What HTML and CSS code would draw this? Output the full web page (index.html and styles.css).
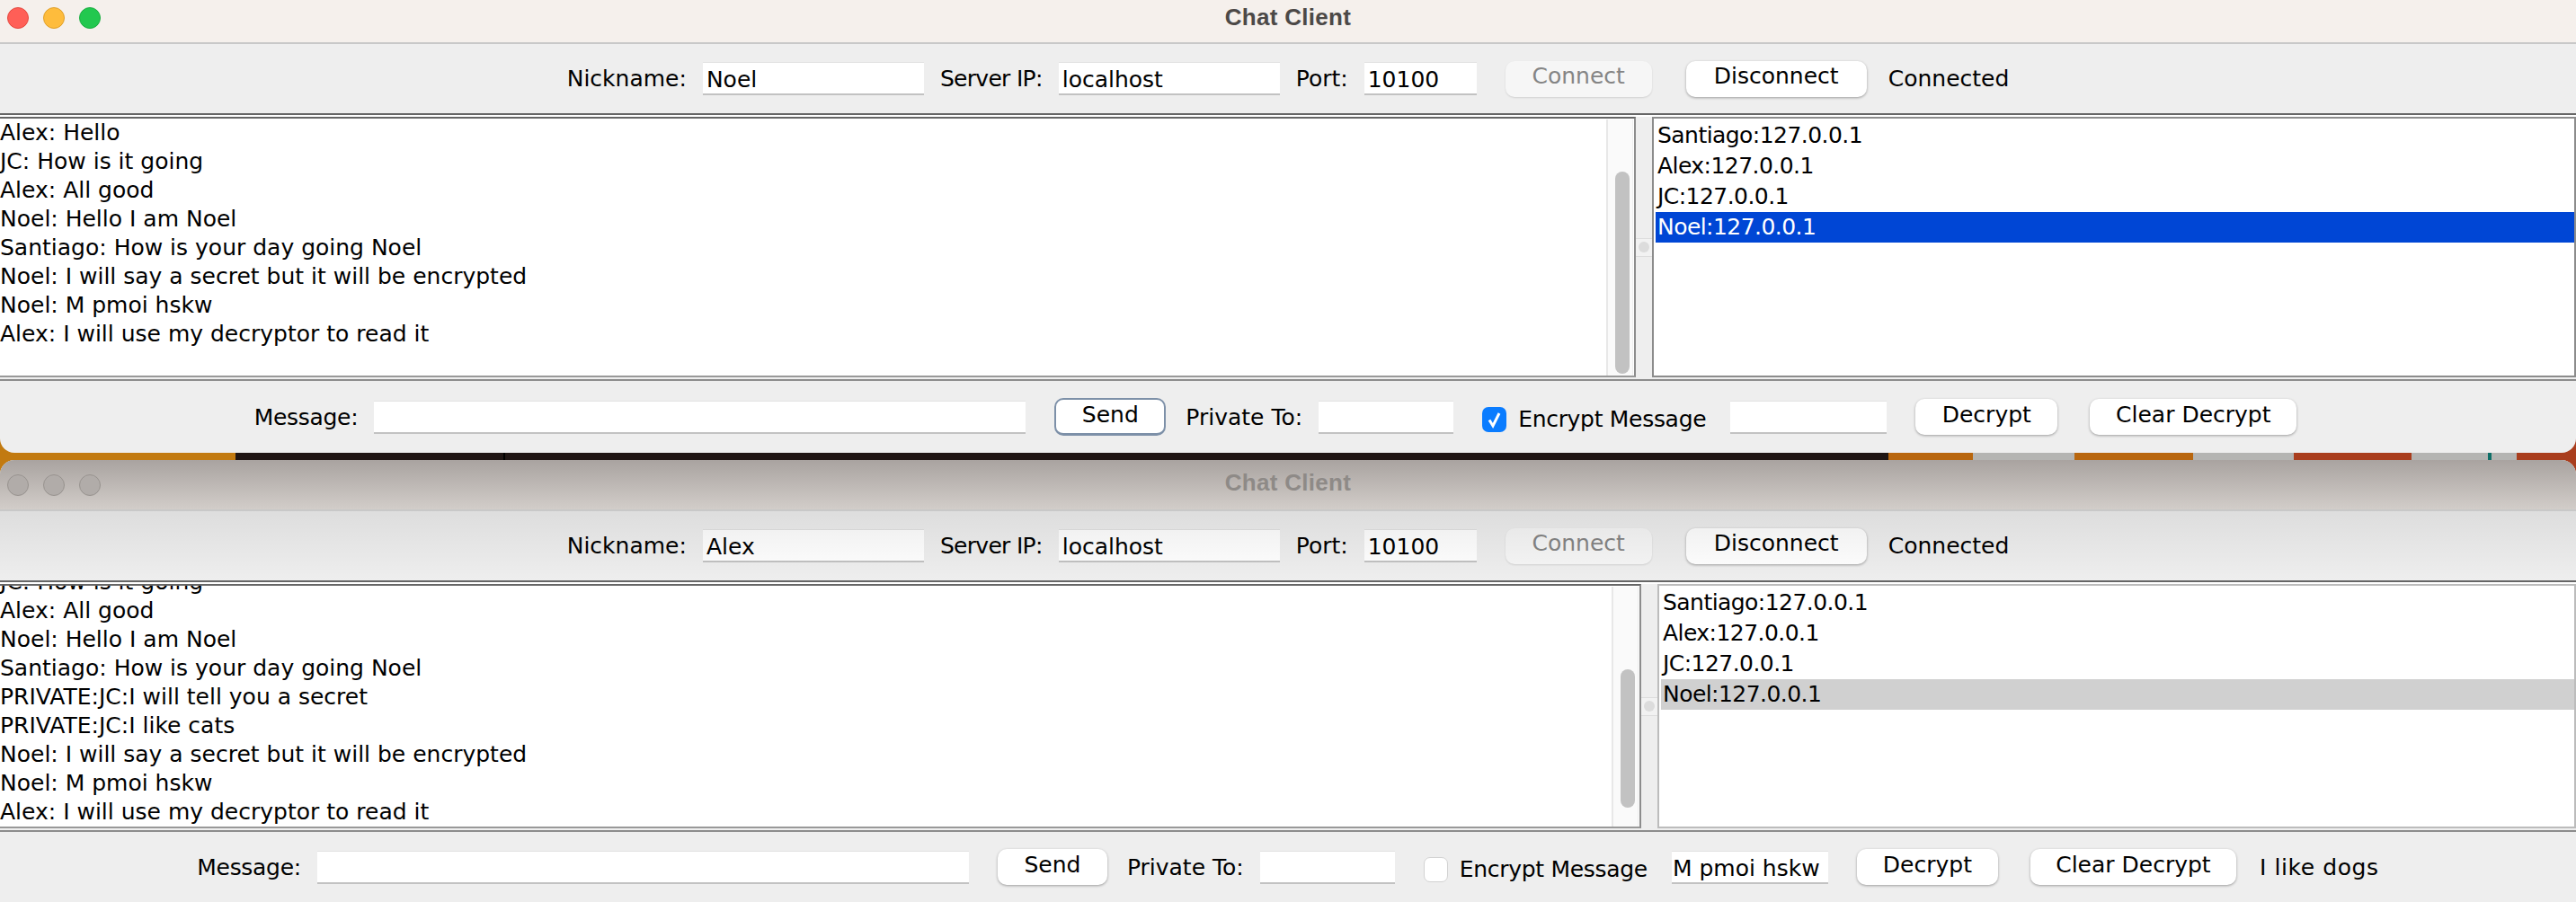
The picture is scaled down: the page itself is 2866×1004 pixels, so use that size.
FILE: index.html
```html
<!DOCTYPE html>
<html>
<head>
  <meta charset="UTF-8">
  <title>Chat Client</title>
  <link rel="stylesheet" href="styles.css">
</head>
<body>
  <!-- focused window -->
  <div class="window win-active">
    <div class="titlebar">
      <div class="lights">
        <span class="light red"></span>
        <span class="light yellow"></span>
        <span class="light green"></span>
      </div>
      <div class="title">Chat Client</div>
    </div>

    <div class="toolbar top-bar">
      <span class="lbl">Nickname:</span>
      <div class="field w-name">Noel</div>
      <span class="lbl lbl-server">Server IP:</span>
      <div class="field w-name">localhost</div>
      <span class="lbl">Port:</span>
      <div class="field w-port">10100</div>
      <div class="btn btn-connect" style="width:163px">Connect</div>
      <div class="btn" style="width:201px">Disconnect</div>
      <span class="lbl">Connected</span>
    </div>

    <div class="split">
      <div class="pane chat-pane">
        <div class="chat-log">
          <div class="row">Alex: Hello</div>
          <div class="row">JC: How is it going</div>
          <div class="row">Alex: All good</div>
          <div class="row">Noel: Hello I am Noel</div>
          <div class="row">Santiago: How is your day going Noel</div>
          <div class="row">Noel: I will say a secret but it will be encrypted</div>
          <div class="row">Noel: M pmoi hskw</div>
          <div class="row">Alex: I will use my decryptor to read it</div>
        </div>
        <div class="scroll"><div class="thumb"></div></div>
      </div>
      <div class="divider"><div class="handle"><span class="dot"></span></div></div>
      <div class="pane user-pane">
        <div class="user">Santiago:127.0.0.1</div>
        <div class="user">Alex:127.0.0.1</div>
        <div class="user">JC:127.0.0.1</div>
        <div class="user selected">Noel:127.0.0.1</div>
      </div>
    </div>

    <div class="toolbar bottom-bar">
      <span class="lbl lbl-msg">Message:</span>
      <div class="field w-msg"></div>
      <div class="btn btn-focus" style="width:124px">Send</div>
      <span class="lbl">Private To:</span>
      <div class="field w-private"></div>
      <div class="check-wrap">
        <span class="check checked">
          <svg viewBox="0 0 27 28" width="27" height="28"><path d="M8 14.5l4 6.5 7-14" fill="none" stroke="#fff" stroke-width="3"/></svg>
        </span>
        <span class="lbl lbl-msg">Encrypt Message</span>
      </div>
      <div class="field w-key"></div>
      <div class="btn" style="width:158px">Decrypt</div>
      <div class="btn" style="width:230px">Clear Decrypt</div>
      <span class="empty"></span>
    </div>
  </div>

  <!-- window behind -->
  <div class="window win-back">
    <div class="titlebar">
      <div class="lights">
        <span class="light"></span>
        <span class="light"></span>
        <span class="light"></span>
      </div>
      <div class="title">Chat Client</div>
    </div>

    <div class="toolbar top-bar">
      <span class="lbl">Nickname:</span>
      <div class="field w-name">Alex</div>
      <span class="lbl lbl-server">Server IP:</span>
      <div class="field w-name">localhost</div>
      <span class="lbl">Port:</span>
      <div class="field w-port">10100</div>
      <div class="btn btn-connect" style="width:163px">Connect</div>
      <div class="btn" style="width:201px">Disconnect</div>
      <span class="lbl">Connected</span>
    </div>

    <div class="split">
      <div class="pane chat-pane">
        <div class="chat-log">
          <div class="row">JC: How is it going</div>
          <div class="row">Alex: All good</div>
          <div class="row">Noel: Hello I am Noel</div>
          <div class="row">Santiago: How is your day going Noel</div>
          <div class="row">PRIVATE:JC:I will tell you a secret</div>
          <div class="row">PRIVATE:JC:I like cats</div>
          <div class="row">Noel: I will say a secret but it will be encrypted</div>
          <div class="row">Noel: M pmoi hskw</div>
          <div class="row">Alex: I will use my decryptor to read it</div>
        </div>
        <div class="scroll"><div class="thumb"></div></div>
      </div>
      <div class="divider"><div class="handle"><span class="dot"></span></div></div>
      <div class="pane user-pane">
        <div class="user">Santiago:127.0.0.1</div>
        <div class="user">Alex:127.0.0.1</div>
        <div class="user">JC:127.0.0.1</div>
        <div class="user selected">Noel:127.0.0.1</div>
      </div>
    </div>

    <div class="toolbar bottom-bar">
      <span class="lbl lbl-msg">Message:</span>
      <div class="field w-msg"></div>
      <div class="btn" style="width:122px">Send</div>
      <span class="lbl">Private To:</span>
      <div class="field w-private"></div>
      <div class="check-wrap">
        <span class="check"></span>
        <span class="lbl lbl-msg">Encrypt Message</span>
      </div>
      <div class="field w-cipher">M pmoi hskw</div>
      <div class="btn" style="width:157px">Decrypt</div>
      <div class="btn" style="width:229px">Clear Decrypt</div>
      <span class="lbl lbl-dogs">I like dogs</span>
    </div>
  </div>
</body>
</html>
```

FILE: styles.css
```css
html, body {
  margin: 0;
  padding: 0;
}

/* the desktop only shows in the strip between the two windows */
body {
  width: 2866px;
  height: 1004px;
  overflow: hidden;
  display: flex;
  flex-direction: column;
  gap: 8px;
  font-family: "DejaVu Sans", sans-serif;
  font-size: 25px;
  color: #000;
  background: linear-gradient(90deg,
    #c27a10 0 262px, #1f1513 262px 560px, #000 560px 562px, #1f1513 562px 2101px,
    #b8660e 2101px 2195px, #b4b4b2 2195px 2308px, #b8660e 2308px 2440px,
    #b4b4b2 2440px 2552px, #a93d1d 2552px 2683px, #b4b4b2 2683px 2768px,
    #0e6f68 2768px 2772px, #b4b4b2 2772px 2800px, #a93d1d 2800px);
}

.window {
  display: flex;
  flex-direction: column;
  overflow: hidden;
  background: #eee;
}

.win-active {
  height: 504px;
  flex: none;
  border-radius: 0 0 16px 16px;
}

.win-back {
  height: 492px;
  flex: none;
  border-radius: 16px 16px 0 0;
}

.titlebar {
  display: flex;
  align-items: center;
  justify-content: center;
  position: relative;
  flex: none;
  border-bottom: 2px solid #c8c8c8;
  box-sizing: border-box;
}

.win-active .titlebar {
  height: 49px;
  background: #f5f0ec;
}

.win-back .titlebar {
  height: 57px;
  background: linear-gradient(180deg, #a9a3a0, #d2cdc9);
}

.lights {
  position: absolute;
  left: 8px;
  display: flex;
  gap: 16px;
}

.win-active .lights {
  top: 8px;
}

.win-back .lights {
  top: 16px;
}

.light {
  width: 24px;
  height: 24px;
  border-radius: 50%;
  box-sizing: border-box;
  background: #b1aca9;
  border: 1px solid #98938f;
}

.red {
  background: #ff5f57;
  border-color: #e5493f;
}

.yellow {
  background: #febc3c;
  border-color: #e0a02a;
}

.green {
  background: #22c84f;
  border-color: #1cae42;
}

.title {
  font-family: "Liberation Sans", sans-serif;
  font-weight: bold;
  font-size: 26px;
  letter-spacing: 0.3px;
}

.win-active .title {
  color: #4c4947;
  margin-bottom: 8px;
}

.win-back .title {
  color: #8e8a87;
  margin-bottom: 4px;
}

.toolbar {
  display: flex;
  align-items: center;
  justify-content: center;
  gap: 18px;
  flex: none;
  position: relative;
}

.top-bar {
  height: 77px;
}

.bottom-bar {
  flex: 1;
}

/* shadow the front window drops on the one behind */
.win-back .top-bar::after {
  content: "";
  position: absolute;
  inset: 0;
  pointer-events: none;
  background: linear-gradient(180deg, rgba(0, 0, 0, 0.07), rgba(0, 0, 0, 0));
}

.lbl {
  white-space: nowrap;
}

.lbl-server {
  letter-spacing: -0.7px;
}

.lbl-msg {
  letter-spacing: -0.3px;
}

.lbl-dogs {
  margin-left: 4px;
  letter-spacing: 0.6px;
}

.field {
  height: 37px;
  line-height: 37px;
  box-sizing: border-box;
  padding: 0 4px;
  background: #fff;
  border-top: 1px solid #e2e2e2;
  border-bottom: 2px solid #c2c2c2;
  white-space: nowrap;
  overflow: hidden;
}

.w-name {
  width: 246px;
}

.w-port {
  width: 125px;
}

.w-msg {
  width: 725px;
}

.w-private {
  width: 150px;
}

.w-key {
  width: 174px;
}

.w-cipher {
  width: 174px;
  padding: 0 1px;
}

.btn {
  height: 40px;
  line-height: 34px;
  box-sizing: border-box;
  margin: 0 4px 0 14px;
  text-align: center;
  background: #fff;
  border-radius: 10px;
  box-shadow: 0 1px 3px rgba(0, 0, 0, 0.35);
  white-space: nowrap;
}

.top-bar .btn {
  margin-right: 6px;
}

.bottom-bar .btn {
  line-height: 36px;
}

.btn-connect {
  background: #f6f6f6;
  color: #858585;
  box-shadow: 0 1px 2px rgba(0, 0, 0, 0.12);
}

.bottom-bar .btn-focus {
  height: 42px;
  line-height: 34px;
  box-shadow: none;
  border: 2px solid #7d90a8;
  border-bottom-width: 3px;
}

.check-wrap {
  display: flex;
  align-items: center;
  gap: 13px;
  margin: 0 9px 0 14px;
}

.check-wrap .lbl {
  padding-top: 5px;
}

.check {
  display: block;
  width: 27px;
  height: 28px;
  box-sizing: border-box;
  border-radius: 7px;
  background: #fff;
  border: 1px solid #d2d2d2;
  margin-top: 5px;
}

.check svg {
  display: block;
}

.check.checked {
  background: #0a7cff;
  border: 0;
}

/* empty status label, it still takes a gap in the row */
.empty {
  width: 6px;
}

/* split pane */
.split {
  display: grid;
  height: 298px;
  flex: none;
  box-sizing: border-box;
  border-top: 2px solid #666;
  border-bottom: 2px solid #8c8c8c;
  padding-top: 2px;
  padding-bottom: 2px;
  background: linear-gradient(180deg, #fff 0 2px, #eee 2px);
}

.win-active .split {
  grid-template-columns: 1820px 18px 1fr;
}

.win-back .split {
  height: 280px;
  grid-template-columns: 1826px 18px 1fr;
}

.pane {
  background: #fff;
  box-sizing: border-box;
  overflow: hidden;
  min-height: 0;
}

.chat-pane {
  display: flex;
  border-top: 2px solid #666;
  border-right: 2px solid #8c8c8c;
  border-bottom: 2px solid #999;
  padding-right: 1px;
}

.chat-log {
  flex: 1;
  min-width: 0;
}

.win-back .chat-log {
  margin-top: -20px;
}

.row {
  height: 32px;
  line-height: 32px;
  white-space: nowrap;
}

.scroll {
  width: 30px;
  flex: none;
  margin-top: 1px;
  box-sizing: border-box;
  padding: 0 6px 0 8px;
  background: #fafafa;
  border-left: 2px solid #e8e8e8;
  border-right: 1px solid #eee;
}

.thumb {
  width: 16px;
  border-radius: 8px;
  background: #c2c2c2;
}

.win-active .thumb {
  height: 225px;
  margin-top: 58px;
}

.win-back .thumb {
  height: 154px;
  margin-top: 92px;
}

.divider {
  display: flex;
  align-items: center;
}

.handle {
  width: 100%;
  height: 19px;
  display: flex;
  align-items: center;
  justify-content: center;
  background: #f2f2f2;
  border-top: 1px solid #ddd;
  border-bottom: 1px solid #ddd;
}

.dot {
  width: 12px;
  height: 12px;
  border-radius: 50%;
  background: #dcdcdc;
}

.user-pane {
  border: 2px solid #8c8c8c;
  padding: 2px 0 0 2px;
}

.win-back .user-pane {
  border-color: #bcbcbc;
}

.user {
  height: 34px;
  line-height: 34px;
  padding-left: 2px;
  letter-spacing: -0.55px;
  white-space: nowrap;
}

.win-active .selected {
  background: #0046d5;
  color: #fff;
}

.win-back .selected {
  background: #d0d0d0;
}
```
